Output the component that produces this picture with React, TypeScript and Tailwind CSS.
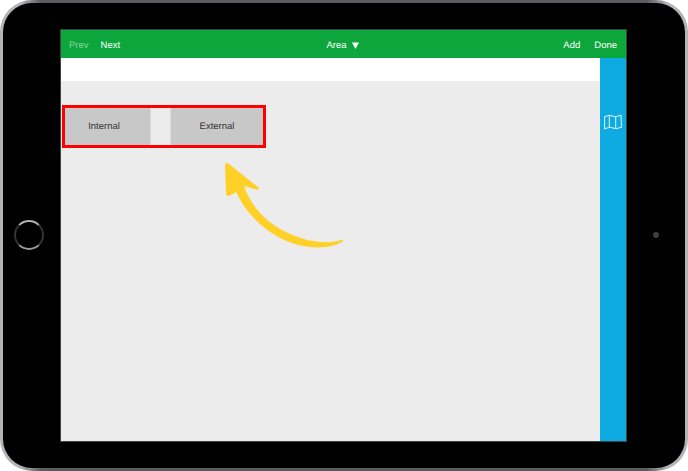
export default function App() {
  return (
    <div className="relative w-[688px] h-[471px] overflow-hidden bg-white font-['Liberation_Sans',sans-serif] [text-rendering:geometricPrecision]">
      <div className="w-full h-full rounded-[32px] bg-[linear-gradient(to_right,#b4b4b8_0%,#b4b4b8_3%,#5c5c60_6%,#5c5c60_94%,#b4b4b8_97%,#b4b4b8_100%)] p-[3px]">
        <div className="flex items-center w-full h-full rounded-[29px] bg-black pl-[57px] pr-[58px]">
          <div className="relative flex flex-col w-[568px] h-[413px] border border-[#3c4448] bg-[#ececec]">
            <header className="flex items-center justify-between h-[28px] bg-[#0ca63c] pl-[8px] pr-[9px] pt-[4px] text-[9.500px] text-white shrink-0">
              <div className="flex gap-[12px] w-[120px]">
                <span className="text-white/50">Prev</span>
                <span>Next</span>
              </div>
              <div className="flex items-center gap-[5px] pr-[1px]">
                <span>Area</span>
                <svg className="mb-[2px]" width="7" height="7" viewBox="0 0 8 8"><path d="M0 0.500h8L4 8z" fill="#fff" /></svg>
              </div>
              <div className="flex justify-end gap-[14px] w-[120px]">
                <span>Add</span>
                <span>Done</span>
              </div>
            </header>
            <div className="flex flex-1 min-h-0">
              <main className="flex flex-col flex-1">
                <div className="h-[23px] bg-white" />
                <div className="flex gap-[19px] pl-[4px] pt-[27px] text-[9.500px] text-[#333]">
                  <div className="flex items-center justify-center w-[86px] h-[37px] pr-[7px] pt-[2px] bg-[#c8c8c8] border-r border-[#dcdcdc]">Internal</div>
                  <div className="flex items-center justify-center w-[93px] h-[37px] pt-[2px] bg-[#c8c8c8] border-l border-[#dcdcdc]">External</div>
                </div>
              </main>
              <aside className="flex justify-center w-[26px] bg-[#0eabe2] pt-[56px] pr-[1px]">
                <svg width="19" height="16" viewBox="0 0 18 15" fill="none" stroke="#d4eef9" strokeWidth="1" strokeLinejoin="round">
                  <path d="M1.500 2.500 6 1l6 1.500L17 1l.5 11.500-5 1.500-6-1.500-5 1.500z" />
                  <path d="M6 1v11.500M12 2.500V14" />
                </svg>
              </aside>
            </div>
            <div className="absolute left-[1px] top-[75px] w-[204px] h-[43px] border-[3px] border-[#ff0000]" />
          </div>
        </div>
      </div>
      <svg className="absolute left-0 top-0 pointer-events-none" width="688" height="471" viewBox="0 0 688 471" fill="#ffd028">
        <path d="M225 165C225 163 227 162 229 164L258 187C260 189 258 190 256 189.500L244 186C250 204 264 222 288 233 305 241 325 245 341 240 343 239.500 344 241 342 242 332 248 315 249 298 245 272 238 248 218 236 192L231 195C228 197 226 196 226 193z" />
      </svg>
      <div className="absolute left-[14px] top-[220px] w-[30px] h-[30px] rounded-full border-2 border-t-[#b0b0b0] border-x-[#333] border-b-[#999] blur-[0.5px]" />
      <div className="absolute left-[653px] top-[232px] w-[6px] h-[6px] rounded-full bg-[#3a4048]" />
    </div>
  );
}
